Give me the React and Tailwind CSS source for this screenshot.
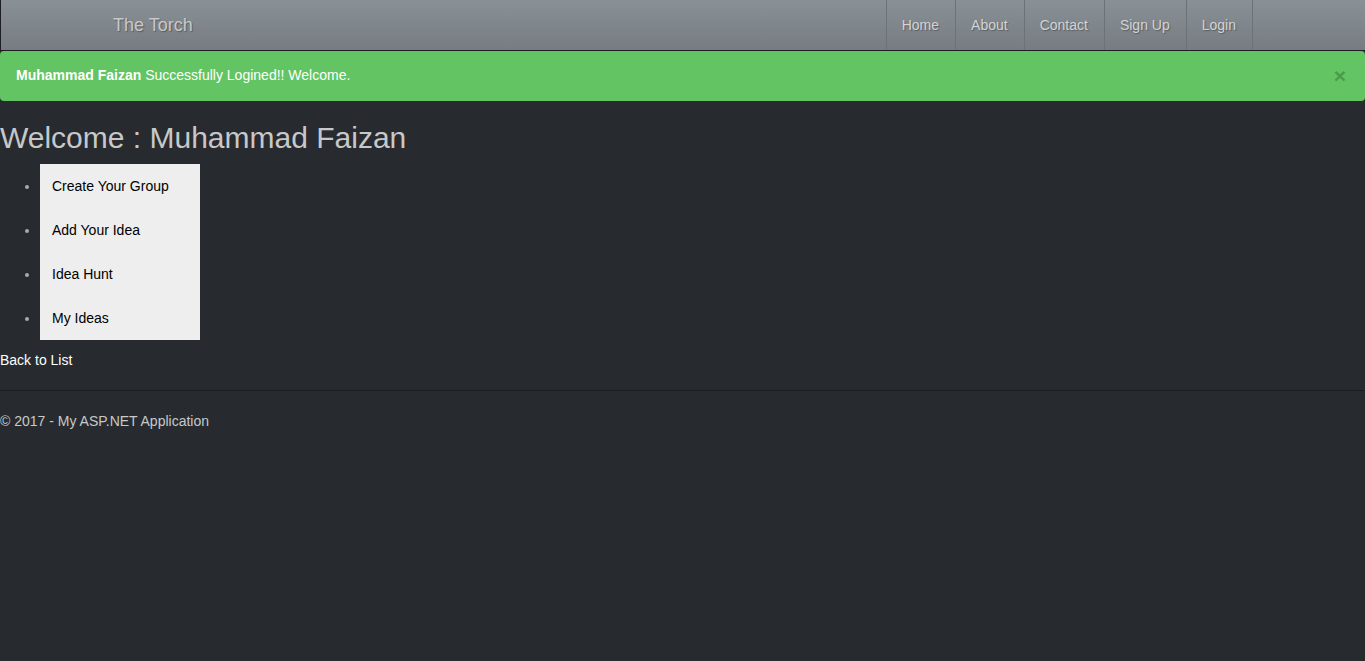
import React from 'react';

const navLinks = ['Home', 'About', 'Contact', 'Sign Up', 'Login'];
const menu = ['Create Your Group', 'Add Your Idea', 'Idea Hunt', 'My Ideas'];

export default function App() {
  return (
    <div className="min-h-[661px] bg-[#272b30] text-[#c8c8c8] text-[14px] leading-[20px] font-['Liberation_Sans',Arial,sans-serif]">
      {/* navbar */}
      <nav className="h-[51px] bg-gradient-to-b from-[#8a9196] to-[#767c82] border-l border-b border-[#1c1e22]">
        <div className="w-[1170px] mx-auto flex items-stretch justify-between h-[50px]">
          <a className="pl-[15px] flex items-center text-[18px] text-[#c8c8c8] [text-shadow:1px_1px_1px_rgba(0,0,0,0.3)]">
            The Torch
          </a>
          <ul className="flex mr-[15px]">
            {navLinks.map((l) => (
              <li key={l} className="flex border-l border-[#6c7278] last:border-r">
                <a className="pl-[15px] pr-[16px] flex items-center text-[#d2d4d6] [text-shadow:1px_1px_1px_rgba(0,0,0,0.3)]">
                  {l}
                </a>
              </li>
            ))}
          </ul>
        </div>
      </nav>

      {/* alert */}
      <div className="bg-[#62c462] text-white rounded-[4px] pl-[16px] pr-[15px] pb-[2px] h-[50px] flex items-center justify-between">
        <p>
          <strong className="font-bold">Muhammad Faizan</strong> Successfully Logined!! Welcome.
        </p>
        <span className="text-[21px] font-bold text-[#3f8a3f] opacity-70 mr-[4px] leading-none">×</span>
      </div>

      <h2 className="mt-[20px] mb-[10px] text-[30px] leading-[33px] text-[#c8c8c8]">Welcome : Muhammad Faizan</h2>

      <ul className="list-disc pl-[40px] mb-[10px] w-[200px]">
        {menu.map((m) => (
          <li key={m} className="bg-[#eeeeee] marker:text-[#aaaaaa]">
            <a className="block px-[12px] py-[12px] text-black">{m}</a>
          </li>
        ))}
      </ul>

      <a className="text-white">Back to List</a>

      <hr className="mt-[20px] border-t border-[#1c1e22]" />
      <footer>
        <p className="my-[20px]">© 2017 - My ASP.NET Application</p>
      </footer>
    </div>
  );
}
